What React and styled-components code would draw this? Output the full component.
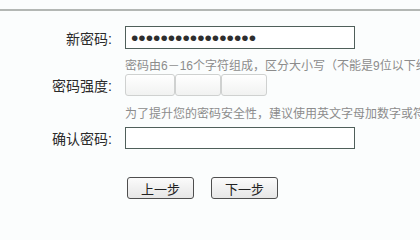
import React from "react"
import styled, { createGlobalStyle } from "styled-components"

const GlobalStyle = createGlobalStyle`
  html, body {
    margin: 0;
    padding: 0;
    background: #fbfdfd;
    font-family: "Liberation Sans", "Noto Sans CJK SC", sans-serif;
  }
`

const Page = styled.div`
  width: 420px;
  height: 240px;
  overflow: hidden;
`

const TopRule = styled.div`
  height: 2px;
  margin-top: 9px;
  background: #b3b7b4;
`

const Form = styled.form`
  display: grid;
  grid-template-columns: 112px 1fr;
  column-gap: 13px;
  align-items: center;
  padding-top: 15px;
`

const Label = styled.label`
  text-align: right;
  font-size: 14px;
  color: #2a2a2a;
  white-space: nowrap;
  margin-top: ${p => p.$top || 0}px;
`

const TextInput = styled.input`
  box-sizing: border-box;
  width: 230px;
  height: ${p => p.$h || 23}px;
  margin: ${p => p.$top || 0}px 0 0 0;
  padding: 0 5px;
  border: 1px solid #4f5f5a;
  background: #fff;
  font-family: "Liberation Sans", sans-serif;
  font-size: 21px;
  color: #2e2e2e;
  outline: none;
`

const Hint = styled.div`
  grid-column: 2;
  font-size: 12px;
  line-height: 14px;
  color: #8c8c8c;
  white-space: nowrap;
  overflow: hidden;
  margin-top: ${p => p.$top}px;
`

const Strength = styled.div`
  display: flex;
  height: 22px;
  margin-top: 1px;
`

const Level = styled.span`
  box-sizing: border-box;
  width: ${p => p.$w}px;
  height: 22px;
  border: 1px solid #cfd1d0;
  border-radius: 3px;
  background: linear-gradient(#ffffff, #f1f2f1);
`

const Actions = styled.div`
  display: flex;
  gap: 17px;
  margin: 28px 0 0 127px;
`

const Button = styled.button`
  box-sizing: border-box;
  width: 67px;
  height: 22px;
  padding: 0;
  border: 1px solid #4e4e4e;
  border-radius: 3px;
  background: linear-gradient(#fbfbfb, #e6e6e6);
  font-family: "Liberation Sans", "Noto Sans CJK SC", sans-serif;
  font-size: 13px;
  color: #222;
`

export default function App() {
  return (
    <Page>
      <GlobalStyle />
      <TopRule />
      <Form>
        <Label htmlFor="pwd">新密码:</Label>
        <TextInput id="pwd" type="password" defaultValue="abcdefghijklmnopq" readOnly />

        <Hint $top={10}>密码由6－16个字符组成，区分大小写（不能是9位以下纯数字）</Hint>

        <Label>密码强度:</Label>
        <Strength>
          <Level $w={50} />
          <Level $w={46} />
          <Level $w={46} />
        </Strength>

        <Hint $top={11}>为了提升您的密码安全性，建议使用英文字母加数字或符号的混合密码</Hint>

        <Label htmlFor="pwd2" $top={6}>确认密码:</Label>
        <TextInput id="pwd2" type="password" $h={22} $top={6} />
      </Form>
      <Actions>
        <Button type="button">上一步</Button>
        <Button type="button">下一步</Button>
      </Actions>
    </Page>
  )
}
